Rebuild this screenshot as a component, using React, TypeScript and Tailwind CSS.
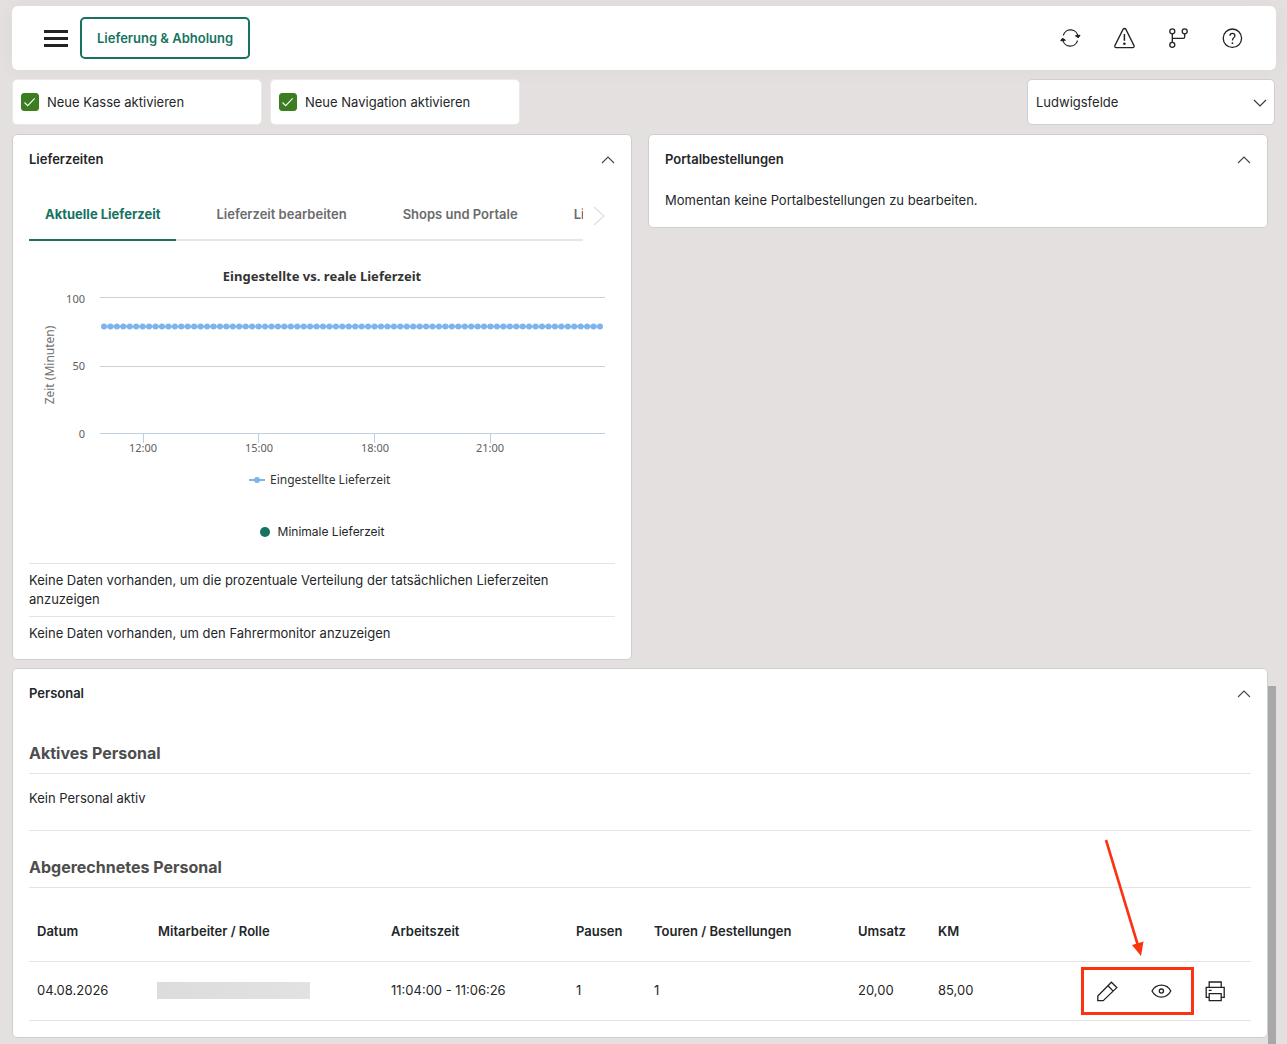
import React, { useState } from 'react';

type IconProps = { className?: string; children: React.ReactNode };

const Icon: React.FC<IconProps> = ({ className = 'w-6 h-6', children }) => (
  <svg
    viewBox="0 0 24 24"
    className={className}
    fill="none"
    stroke="currentColor"
    strokeWidth="1.3"
    strokeLinejoin="round"
    aria-hidden="true"
  >
    {children}
  </svg>
);

const RefreshIcon = () => (
  <Icon>
    <path d="M5.3 9.4A7.5 7.5 0 0 1 20 10.8M19.5 14.6A7.5 7.5 0 0 1 4.8 13.2" />
    <path d="M17.6 9.8L20.2 11.4L21.8 9.4ZM7.200 14.200L4.600 12.600L3 14.600Z" fill="currentColor" />
  </Icon>
);

const WarningIcon = () => (
  <Icon>
    <path d="M11 3.4C11.6 2.2 13.300 2.200 13.900 3.400L21.900 19.400C22.500 20.600 21.900 21.600 20.700 21.600H4.200C3 21.600 2.400 20.600 3 19.400Z" />
    <path d="M12.4 8V14.8" strokeWidth="1.5" />
    <circle cx="12.4" cy="17.8" r="1.3" fill="currentColor" stroke="none" />
  </Icon>
);

const BranchIcon = () => (
  <Icon>
    <circle cx="6.3" cy="5.3" r="2.5" />
    <circle cx="18.7" cy="5.3" r="2.5" />
    <circle cx="6.3" cy="18.8" r="2.5" />
    <path d="M6.3 7.8V16.3M6.3 12.3H17.3C18.2 12.3 18.7 11.8 18.7 10.9V7.8" />
  </Icon>
);

const HelpIcon = () => (
  <Icon>
    <circle cx="12.4" cy="12.2" r="9.2" />
    <path d="M9.9 9.8C9.9 8.3 11 7.4 12.4 7.4C13.8 7.4 14.9 8.3 14.9 9.7C14.9 11.6 12.4 11.8 12.4 14.4" />
    <circle cx="12.4" cy="17.2" r="0.9" fill="currentColor" stroke="none" />
  </Icon>
);

const PencilIcon = () => (
  <Icon>
    <path d="M2.8 21.7V17L16.4 3.2L21.8 8.6L8.2 21.7ZM13 6.7L18.2 12.1" strokeLinejoin="miter" />
  </Icon>
);

const EyeIcon = () => (
  <Icon>
    <path d="M3 12C5 8.2 8.3 6.1 12.4 6.1C16.5 6.1 19.8 8.2 21.8 12C19.8 15.8 16.5 18.1 12.4 18.1C8.3 18.1 5 15.8 3 12Z" />
    <circle cx="12.4" cy="12.1" r="2.1" />
  </Icon>
);

const PrinterIcon = () => (
  <Icon>
    <path
      d="M6.2 8.4V3H18.2V8.4M6.2 18.4H3.2V8.4H21.2V18.4H18.2M6.2 14.7H18.2V21.6H6.2ZM5.8 11.3H8.6"
      strokeLinejoin="miter"
    />
  </Icon>
);

const ChevronUp = () => (
  <svg viewBox="0 0 14 8" className="w-[14px] h-2" fill="none" stroke="#444" strokeWidth="1.1" aria-hidden="true">
    <path d="M1 7L7 1L13 7" />
  </svg>
);

const Card: React.FC<{ title: string; children: React.ReactNode; className?: string }> = ({
  title,
  children,
  className = '',
}) => {
  const [open, setOpen] = useState(true);
  return (
    <section className={`bg-white border border-[#cfcfcf] rounded-[5px] px-4 ${className}`}>
      <header className="flex items-center justify-between h-12">
        <h2 className="font-semibold">{title}</h2>
        <button type="button" aria-label={title} onClick={() => setOpen(!open)} className="pt-px">
          <ChevronUp />
        </button>
      </header>
      {open && children}
    </section>
  );
};

const Toggle: React.FC<{ id: string; label: string }> = ({ id, label }) => (
  <label
    htmlFor={id}
    className="flex items-center w-[250px] h-[46px] px-2 bg-white border border-[#eae8e8] rounded-[5px]"
  >
    <span className="relative w-[18px] h-[18px] mr-2">
      <input
        id={id}
        type="checkbox"
        defaultChecked
        className="peer block appearance-none w-[18px] h-[18px] rounded-[3px] border border-[#3d7d22] checked:bg-[#3d7d22]"
      />
      <svg
        viewBox="0 0 18 18"
        className="absolute inset-0 hidden peer-checked:block pointer-events-none"
        fill="none"
        stroke="#fff"
        strokeWidth="1.1"
        aria-hidden="true"
      >
        <path d="M3.5 9.5L6.7 12.7L13.7 5.4" />
      </svg>
    </span>
    {label}
  </label>
);

const tabs = ['Aktuelle Lieferzeit', 'Lieferzeit bearbeiten', 'Shops und Portale', 'Li'];

const Tabs = () => {
  const [active, setActive] = useState(0);
  return (
    <div className="flex mt-1">
      <div role="tablist" className="flex flex-1 min-w-0 gap-6 overflow-hidden shadow-[inset_0_-2px_0_#e6e6e6]">
        {tabs.map((tab, i) => (
          <button
            key={tab}
            type="button"
            role="tab"
            aria-selected={i === active}
            onClick={() => setActive(i)}
            className={
              i === active
                ? 'shrink-0 h-[54px] px-4 pt-[2px] whitespace-nowrap font-bold text-[#16735f] border-b-2 border-[#16735f]'
                : 'shrink-0 h-[54px] px-4 pt-[2px] whitespace-nowrap font-semibold text-[#6b6b6b] border-b-2 border-transparent'
            }
          >
            {tab}
          </button>
        ))}
      </div>
      <button type="button" aria-label="Weitere Tabs" className="w-8 flex items-center justify-center pt-1">
        <svg viewBox="0 0 12 20" className="w-3 h-5" fill="none" stroke="#dedede" strokeWidth="1.2">
          <path d="M1 1L11 10L1 19" />
        </svg>
      </button>
    </div>
  );
};

// one value every ten minutes, 11:00 - 23:50
const points = Array.from({ length: 78 }, (_, i) => 75 + (i * 496) / 77);

const hours = [
  { x: 114, label: '12:00' },
  { x: 230, label: '15:00' },
  { x: 346, label: '18:00' },
  { x: 461, label: '21:00' },
];

const DeliveryChart = () => (
  <svg
    viewBox="0 0 586 250"
    className="block w-full mt-[9px] font-['Noto_Sans','DejaVu_Sans',sans-serif]"
    role="img"
    aria-label="Eingestellte vs. reale Lieferzeit"
  >
    <text x="293" y="31" textAnchor="middle" fontSize="13" fontWeight="700" fill="#333">
      Eingestellte vs. reale Lieferzeit
    </text>
    <path d="M71 47.5H576M71 116.5H576" stroke="#d0d0d0" />
    <path d="M71 183.5H576M114.5 184V193M229.5 184V193M345.5 184V193M461.5 184V193" stroke="#c0d0e0" fill="none" />
    <g fontSize="11" fill="#606060">
      <g textAnchor="end">
        <text x="56" y="53">100</text>
        <text x="56" y="120">50</text>
        <text x="56" y="188">0</text>
      </g>
      <g textAnchor="middle">
        {hours.map((h) => (
          <text key={h.label} x={h.x} y="202">
            {h.label}
          </text>
        ))}
      </g>
    </g>
    <text transform="rotate(-90 25 115)" x="25" y="115" textAnchor="middle" fontSize="12" fill="#707070">
      Zeit (Minuten)
    </text>
    <path d="M75 76.5H571" stroke="#7cb5ec" strokeWidth="2" />
    <g fill="#7cb5ec">
      {points.map((x) => (
        <circle key={x} cx={x} cy="76.5" r="3" />
      ))}
    </g>
    <path d="M220 230H236" stroke="#7cb5ec" strokeWidth="2" />
    <circle cx="228" cy="230" r="3" fill="#7cb5ec" />
    <text x="241" y="234" fontSize="12" fill="#333">
      Eingestellte Lieferzeit
    </text>
  </svg>
);

const StaffTable = () => (
  <table className="w-full table-fixed text-left">
    <thead>
      <tr className="h-[73px] border-b border-[#e4e4e4]">
        <th className="w-[121px] px-2 pt-[15px] font-semibold">Datum</th>
        <th className="w-[233px] px-2 pt-[15px] font-semibold">Mitarbeiter / Rolle</th>
        <th className="w-[185px] px-2 pt-[15px] font-semibold">Arbeitszeit</th>
        <th className="w-[78px] px-2 pt-[15px] font-semibold">Pausen</th>
        <th className="w-[204px] px-2 pt-[15px] font-semibold">Touren / Bestellungen</th>
        <th className="w-[80px] px-2 pt-[15px] font-semibold">Umsatz</th>
        <th className="w-[80px] px-2 pt-[15px] font-semibold">KM</th>
        <th aria-label="Aktionen" />
      </tr>
    </thead>
    <tbody>
      <tr className="h-[59px] border-b border-[#e4e4e4]">
        <td className="px-2">04.08.2026</td>
        <td className="px-[7px]">
          <div className="w-[153px] h-[17px] bg-linear-to-r from-[#dcdcdc] to-[#e2e2e2]" />
        </td>
        <td className="px-2">11:04:00 - 11:06:26</td>
        <td className="px-2">1</td>
        <td className="px-2">1</td>
        <td className="px-2">20,00</td>
        <td className="px-2">85,00</td>
        <td className="pr-6">
          <div className="flex justify-end gap-[30px] text-[#222]">
            <div className="relative flex gap-[30px]">
              <button type="button" aria-label="Bearbeiten">
                <PencilIcon />
              </button>
              <button type="button" aria-label="Ansehen">
                <EyeIcon />
              </button>
              {/* highlight around both actions */}
              <div className="absolute -left-[14px] -right-[21px] -top-3 -bottom-3 border-[3px] border-[#fc3310] pointer-events-none" />
              <svg
                viewBox="0 0 42 120"
                className="absolute left-[8px] bottom-[45px] w-[42px] h-[120px] pointer-events-none"
                aria-hidden="true"
              >
                <path d="M3 2L34.5 106" stroke="#fc3310" strokeWidth="2.600" />
                <path d="M29 107L40.5 103.5L38 118Z" fill="#fc3310" />
              </svg>
            </div>
            <button type="button" aria-label="Drucken">
              <PrinterIcon />
            </button>
          </div>
        </td>
      </tr>
    </tbody>
  </table>
);

const TopBar = () => (
  <header className="flex items-center justify-between h-16 pl-8 pr-8 bg-white rounded-md shadow-[0_0_20px_rgba(0,0,0,0.04)]">
    <div className="flex items-center gap-3">
      <button type="button" aria-label="Menü" className="flex flex-col gap-1 w-6">
        <span className="h-[3px] bg-[#222]" />
        <span className="h-[3px] bg-[#222]" />
        <span className="h-[3px] bg-[#222]" />
      </button>
      <button
        type="button"
        className="h-[42px] px-[15px] border-2 border-[#16735f] rounded-[5px] font-semibold text-[#16735f]"
      >
        Lieferung &amp; Abholung
      </button>
    </div>
    <nav className="flex gap-[30px] text-[#222]">
      <button type="button" aria-label="Aktualisieren">
        <RefreshIcon />
      </button>
      <button type="button" aria-label="Warnungen">
        <WarningIcon />
      </button>
      <button type="button" aria-label="Verzweigung">
        <BranchIcon />
      </button>
      <button type="button" aria-label="Hilfe">
        <HelpIcon />
      </button>
    </nav>
  </header>
);

const App: React.FC = () => {
  return (
    <div className="min-h-screen flex flex-col bg-[#e4e0df] pt-[6px] pl-3 pr-[11px] font-['Inter',sans-serif] text-[13px] leading-[19px] text-[#242729]">
      <TopBar />

      <div className="flex gap-2 mt-[9px]">
        <Toggle id="neue-kasse" label="Neue Kasse aktivieren" />
        <Toggle id="neue-navigation" label="Neue Navigation aktivieren" />
        <div className="relative ml-auto mr-px w-[248px]">
          <select
            aria-label="Filiale"
            className="appearance-none block w-full h-[46px] px-2 bg-white border border-[#cfcfcf] rounded-[5px]"
          >
            <option>Ludwigsfelde</option>
          </select>
          <svg
            viewBox="0 0 14 8"
            className="absolute right-2 top-5 w-[14px] h-2 pointer-events-none"
            fill="none"
            stroke="#333"
            strokeWidth="1.1"
            aria-hidden="true"
          >
            <path d="M1 1L7 7L13 1" />
          </svg>
        </div>
      </div>

      <div className="grid grid-cols-2 gap-4 items-start mt-[9px] mr-2">
        <Card title="Lieferzeiten">
          <Tabs />
          <DeliveryChart />
          <div className="flex items-center justify-center gap-2 mt-6 mb-[23px] text-xs">
            <span className="w-[10px] h-[10px] rounded-full bg-[#16735f]" />
            Minimale Lieferzeit
          </div>
          <p className="py-[7px] border-t border-[#e4e4e4]">
            Keine Daten vorhanden, um die prozentuale Verteilung der tatsächlichen Lieferzeiten anzuzeigen
          </p>
          <p className="pt-[7px] pb-4 border-t border-[#e4e4e4]">Keine Daten vorhanden, um den Fahrermonitor anzuzeigen</p>
        </Card>

        <Card title="Portalbestellungen">
          <p className="pt-2 pb-[17px]">Momentan keine Portalbestellungen zu bearbeiten.</p>
        </Card>
      </div>

      <div className="flex flex-1 mt-2">
        <Card title="Personal" className="flex-1 min-w-0 mb-[7px] pb-4">
          <h3 className="pt-6 pb-2 text-base font-bold text-[#4d4d4d] border-b border-[#e4e4e4]">Aktives Personal</h3>
          <p className="pt-[15px] pb-[22px] border-b border-[#e4e4e4]">Kein Personal aktiv</p>
          <h3 className="pt-6 pb-2 text-base font-bold text-[#4d4d4d] border-b border-[#e4e4e4]">Abgerechnetes Personal</h3>
          <StaffTable />
        </Card>
        {/* scroll thumb of the content pane */}
        <div className="w-2 mt-[18px] bg-[#a8a8a8]" />
      </div>
    </div>
  );
};

export default App;
